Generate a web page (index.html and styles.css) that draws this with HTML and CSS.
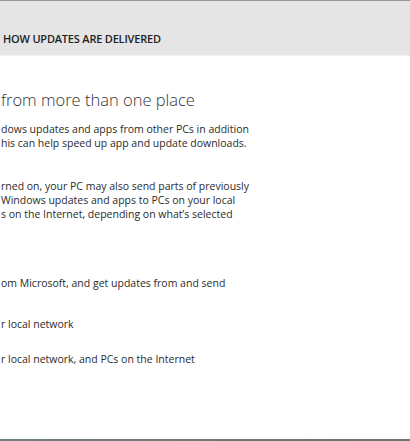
FILE: index.html
```html
<!DOCTYPE html>
<html>
<head>
<meta charset="utf-8">
<link rel="stylesheet" href="styles.css">
</head>
<body>
<div class="page">
  <header class="header"><span class="header-title">HOW UPDATES ARE DELIVERED</span></header>
  <main class="content">
    <h1 class="title">from more than one place</h1>
    <p class="para first">dows updates and apps from other PCs in addition<br>his can help speed up app and update downloads.</p>
    <p class="para second">rned on, your PC may also send parts of previously<br>Windows updates and apps to PCs on your local<br>s on the Internet, depending on what’s selected</p>
    <p class="para option1">om Microsoft, and get updates from and send</p>
    <p class="para option2">r local network</p>
    <p class="para option3">r local network, and PCs on the Internet</p>
  </main>
  <div class="bottom-line"></div>
</div>
</body>
</html>
```
FILE: styles.css
```css
html, body {
  margin: 0;
  padding: 0;
  background: #ffffff;
}
.page {
  width: 410px;
  height: 441px;
  display: flex;
  flex-direction: column;
  overflow: hidden;
  font-family: "Open Sans", "Noto Sans", sans-serif;
  color: #2b2b2b;
}
.header {
  height: 56px;
  background: #e5e5e5;
  border-top: 1px solid #9a9a9a;
  border-bottom: 1px solid #f2f2f2;
  display: flex;
  align-items: flex-end;
  padding: 0 0 8px 3px;
  box-sizing: border-box;
  flex: none;
}
.header-title {
  font-size: 11px;
  font-weight: 600;
  letter-spacing: -0.2px;
  color: #222;
  line-height: 16px;
}
.content {
  flex: 1;
  padding-left: 1px;
}
.title {
  margin: 32px 0 0 0;
  font-size: 16.5px;
  font-weight: 300;
  color: #333;
  line-height: 24px;
}
.para {
  margin: 0;
  font-size: 10.5px;
  line-height: 14px;
  color: #2b2b2b;
}
.first { margin-top: 10px; }
.second { margin-top: 29px; }
.option1 { margin-top: 55px; }
.option2 { margin-top: 27px; }
.option3 { margin-top: 21px; }
.bottom-line {
  height: 2px;
  background: linear-gradient(to right, #6d7f7d, #737373);
  flex: none;
}
```
